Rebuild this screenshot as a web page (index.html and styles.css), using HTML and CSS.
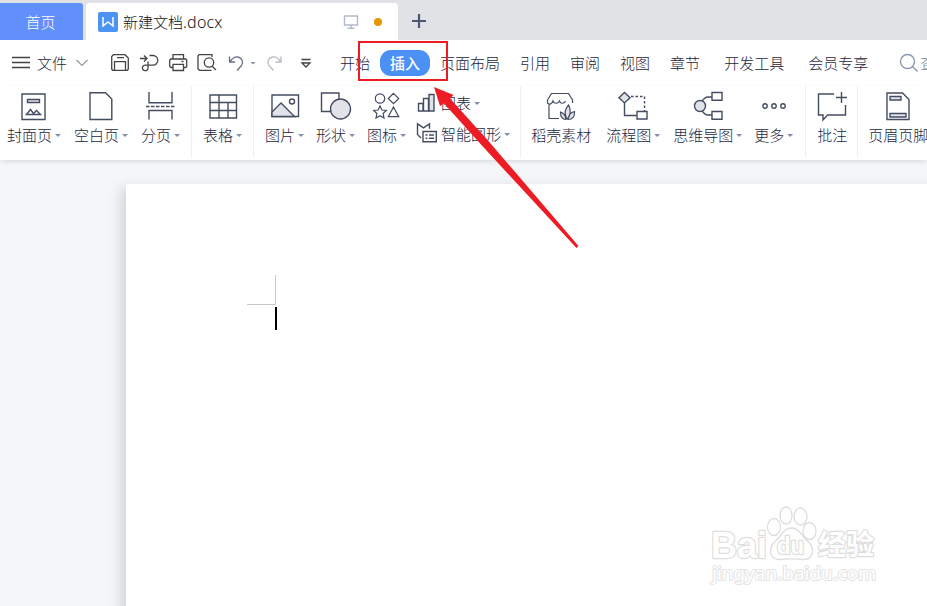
FILE: index.html
```html
<!DOCTYPE html>
<html lang="zh-CN">
<head>
    <meta charset="UTF-8">
    <meta name="viewport" content="width=device-width, initial-scale=1.0">
    <title>新建文档.docx</title>
    <link rel="stylesheet" href="styles.css">
</head>
<body>
    <div class="tabs">
        <div class="tab-home">首页</div>
        <div class="tab-doc">
            <svg class="doc-logo" width="20" height="20" viewBox="0 0 20 20"><path d="M5 5v9l5-4 5 4V5" fill="none" stroke="#fff" stroke-width="1.5"/></svg>
            <span class="doc-name">新建文档<span class="ext">.docx</span></span>
            <svg class="monitor" width="16" height="16" viewBox="0 0 16 16"><path d="M1.500 2h13v9h-13zM8 11v3.300M4.500 14.300h7"/></svg>
            <span class="dot"></span>
        </div>
        <svg class="plus" width="16" height="16" viewBox="0 0 16 16"><path d="M8 1v14M1 8h14"/></svg>
    </div>

    <div class="menu">
        <svg class="burger" width="20" height="20" viewBox="0 0 20 20"><path d="M1 4.500h18M1 9.500h18M1 14.500h18"/></svg>
        <span class="file">文件</span>
        <svg class="chevron" width="12" height="8" viewBox="0 0 12 8"><path d="M.5 1l5.500 5.500L11.500 1"/></svg>
        <span class="line"></span>
        <div class="quick">
            <svg width="20" height="20" viewBox="0 0 20 20"><path d="M3.500 1.700h11.500l3.300 3.300v11.300l-1 1H2.700l-1-1V3.500zM4.500 17V8.700h11V17M7 4.700h7"/></svg>
            <svg width="20" height="20" viewBox="0 0 20 20"><path d="M1 5.500h7M5 2.500l3 3-3 3M10.500 2.500h3.500a4.800 4.800 0 0 1 0 9.600H6.500a2.800 2.800 0 1 0 2.500 2.800V8.500"/></svg>
            <svg width="20" height="20" viewBox="0 0 20 20"><path d="M5 6V1.700h10.500V6M5 14.500H2.700L1.700 13V7l1-1h15l1 1v6.500l-1 1h-2.200M5 11.300h10.500v6.200H5zM13.500 8.500h2"/></svg>
            <svg width="20" height="20" viewBox="0 0 20 20"><path d="M14.500 17.300H2.500L1 15.800V3l1-1.300h13V4"/><circle cx="12" cy="9.500" r="4.700"/><path d="M15 13l4 4"/></svg>
            <svg class="undo" width="20" height="20" viewBox="0 0 20 20"><path d="M2.500 3.500v5.500h5.500M3 8.500C5.500 5 8 3.500 11 4c4 .7 5.800 5 3.500 8.500L10 17.500"/></svg>
            <i class="caret"></i>
            <svg class="redo" width="20" height="20" viewBox="0 0 20 20"><path d="M16 3.500v5.500h-5.500M15.500 8.500C13 5 10.500 3.500 7.500 4c-4 .7-5.800 5-3.500 8.500l4.500 5"/></svg>
            <svg class="more" width="12" height="20" viewBox="0 0 12 20"><path d="M1.500 6.500h9M2 10l4 4 4-4z"/></svg>
        </div>
        <span class="line"></span>
        <div class="menu-tabs">
            <span>开始</span>
            <span class="active">插入</span>
            <span>页面布局</span>
            <span>引用</span>
            <span>审阅</span>
            <span>视图</span>
            <span>章节</span>
            <span class="wide">开发工具</span>
            <span class="wide">会员专享</span>
        </div>
        <div class="search">
            <svg width="20" height="20" viewBox="0 0 20 20"><circle cx="8.500" cy="8.500" r="7"/><path d="M13.500 13.500l5 5"/></svg>
            <span>查</span>
        </div>
    </div>

    <div class="ribbon">
        <div class="group">
            <div class="tool">
                <svg viewBox="0 0 32 32"><path d="M4 4h23v25.500H4zM8.500 24.500l4-5 3 4 3-3 4 4z"/><path class="shade" d="M9.500 9.500h12v3h-12z"/></svg>
                <span>封面页<i class="caret"></i></span>
            </div>
            <div class="tool">
                <svg viewBox="0 0 32 32"><path d="M5 2.700h15.500l6.300 6.300v20.500H5z"/></svg>
                <span>空白页<i class="caret"></i></span>
            </div>
            <div class="tool">
                <svg viewBox="0 0 32 32"><path d="M4 2v10.700h23V2M4 29.500v-9h23v9"/><path d="M1 16.500h29" stroke-dasharray="3.500 1.500"/></svg>
                <span>分页<i class="caret"></i></span>
            </div>
        </div>
        <div class="group">
            <div class="tool">
                <svg viewBox="0 0 32 32"><path d="M3 5h26.500v23H3zM3 12.500h26.500M3 20.500h26.500M12 5v23M21 12.500v15.500"/></svg>
                <span>表格<i class="caret"></i></span>
            </div>
        </div>
        <div class="group insert">
            <div class="tool">
                <svg viewBox="0 0 32 32"><path d="M3 5h26.500v21.500H3z"/><path class="shade" d="M3 22l9-9 13.500 13.500H3z"/><circle cx="23" cy="11.500" r="2.500"/></svg>
                <span>图片<i class="caret"></i></span>
            </div>
            <div class="tool">
                <svg viewBox="0 0 32 32"><path d="M1.500 3H19v18.500H1.500z"/><circle class="shade" cx="20.500" cy="19" r="10"/></svg>
                <span>形状<i class="caret"></i></span>
            </div>
            <div class="tool">
                <svg class="thin" viewBox="0 0 32 32"><circle cx="9" cy="8.500" r="4.700"/><path d="M22.500 3.300l5.200 5.200-5.200 5.200-5.200-5.200zM9 16l1.900 4 4.400.5-3.200 3 .9 4.500-4-2.300-4 2.300.9-4.500-3.200-3 4.400-.5zM22.500 17l5.200 9.700H17.300z"/></svg>
                <span>图标<i class="caret"></i></span>
            </div>
            <div class="stack">
                <div class="row">
                    <svg viewBox="0 0 20 20"><path d="M1.500 10.500h4.500v7.500H1.500zM6.500 5.500h5v12.500h-5z"/><path class="shade" d="M12 1.500h5v16.500h-5z"/></svg>
                    <span>图表<i class="caret"></i></span>
                </div>
                <div class="row">
                    <svg viewBox="0 0 20 20"><path d="M4 14L.5 10.500V-.2l6 4 6-4v5"/><path d="M6 7.500h13.300v10.200H6zM8.500 11h2M12 11h5M8.500 14.200h2M12 14.200h5"/></svg>
                    <span>智能图形<i class="caret"></i></span>
                </div>
            </div>
        </div>
        <div class="group material">
            <div class="tool">
                <svg class="thin" viewBox="0 0 32 32"><path d="M4 14v14.500h10M2.500 10l4-6.500h17l4 6.500v3M2.500 10v3c2 2 4.500 1 5.500-2 1 3 5 3 6.500 0 1 3 4.500 3 6 0"/><path class="shade" d="M22.500 29c-4-5-2.500-10 1-14 2.500 4 2.500 10-1 14zM21 29.500c-4 0-5.500-3-5.500-7.500 3 1 5 4 5.500 7.500zM23 29.500c.5-5 2.500-7 6.500-8 .5 5-2 8-6.500 8z"/></svg>
                <span>稻壳素材</span>
            </div>
            <div class="tool flow">
                <svg viewBox="0 0 32 32"><path d="M7.500 13v12.500h12"/><path d="M14 6.500h13.500V21" stroke-dasharray="2.500 2"/><path class="shade" d="M7.500 2.500l5.500 5.200-5.500 5.200L2 7.700z"/><path d="M20 21.500h10v7.500H20z"/></svg>
                <span>流程图<i class="caret"></i></span>
            </div>
            <div class="tool">
                <svg viewBox="0 0 32 32"><path d="M20 7h-4c-4 0-5 3-7 6M20 25h-4c-4 0-5-3-7-6M20 2.500h10v7.800H20zM20 21.500h10v7.800H20z"/><circle class="shade" cx="8" cy="16" r="5.500"/></svg>
                <span>思维导图<i class="caret"></i></span>
            </div>
            <div class="tool">
                <svg viewBox="0 0 32 32"><circle cx="7" cy="16" r="2.200"/><circle cx="16" cy="16" r="2.200"/><circle cx="25" cy="16" r="2.200"/></svg>
                <span>更多<i class="caret"></i></span>
            </div>
        </div>
        <div class="group comment">
            <div class="tool">
                <svg viewBox="0 0 32 32"><path d="M18 4H2.500v21H7v5l4.500-5h18V15M25.500 2v11M20 7.500h11"/></svg>
                <span>批注</span>
            </div>
        </div>
        <div class="group last">
            <div class="tool">
                <svg viewBox="0 0 32 32"><path d="M5 3h15.500L27 9.500v20H5z"/><path class="shade" d="M8 6.500h11v3.500H8zM8 23.500h16v3.500H8z"/></svg>
                <span>页眉页脚</span>
            </div>
        </div>
    </div>

    <div class="workspace">
        <div class="paper">
            <div class="corner"></div>
            <div class="cursor"></div>
        </div>
    </div>

    <svg class="watermark" width="180" height="90" viewBox="0 0 180 90">
        <text class="brand" x="11" y="58" textLength="56" lengthAdjust="spacingAndGlyphs">Bai</text>
        <ellipse cx="74" cy="27" rx="6.500" ry="8.500"/>
        <ellipse cx="86" cy="15.500" rx="6" ry="8.500"/>
        <ellipse cx="100.500" cy="16.500" rx="6.500" ry="8.500"/>
        <ellipse cx="109.500" cy="31" rx="6.500" ry="8.500"/>
        <path d="M91.500 28c8 0 10 8 16 13 9 8 5 19-5 18.500-8-.8-14-.8-22 0-10 .5-14-10-5-18.500 6-5 8-13 16-13z"/>
        <text class="du" x="77" y="54" textLength="27" lengthAdjust="spacingAndGlyphs">du</text>
        <text class="exp" x="118" y="55" textLength="56" lengthAdjust="spacingAndGlyphs">经验</text>
        <text class="site" x="12" y="80" textLength="164" lengthAdjust="spacingAndGlyphs">jingyan.baidu.com</text>
    </svg>

    <div class="mark-box"></div>
    <svg class="mark-arrow" width="150" height="165" viewBox="0 0 150 165"><path d="M4 7L23.500 15l-3.300 3.800L58 60.500 148.500 166l-2 2L51 64.500 14 23.500 10 26z"/></svg>
</body>
</html>
```
FILE: styles.css
```css
* {
    box-sizing: border-box;
}
body {
    position: relative;
    width: 927px;
    height: 606px;
    margin: 0;
    overflow: hidden;
    display: flex;
    flex-direction: column;
    font-family: "Noto Sans CJK SC", sans-serif;
    font-size: 15px;
    font-weight: 300;
    line-height: 20px;
    color: #1c263c;
    background-color: #fff;
    white-space: nowrap;
}
svg {
    display: block;
    flex: none;
    fill: none;
    stroke: #434d61;
    stroke-width: 1.4;
}
.caret {
    display: inline-block;
    width: 6px;
    height: 3px;
    margin-left: 3px;
    vertical-align: 4px;
    background-color: #8290ab;
    clip-path: polygon(0 0, 100% 0, 50% 100%);
}

/* document tabs */
.tabs {
    flex: none;
    display: flex;
    height: 40px;
    padding-top: 3px;
    background-color: #e1e2e6;
}
.tab-home {
    width: 83px;
    padding: 9px 2px 0 0;
    text-align: center;
    color: #fff;
    background-color: #618ffc;
    border-radius: 0 3px 0 0;
}
.tab-doc {
    display: flex;
    align-items: center;
    width: 312px;
    margin-left: 3px;
    padding-left: 12px;
    background-color: #fff;
    border-radius: 4px 4px 0 0;
}
.doc-logo {
    background-color: #4b94f4;
    border-radius: 2px;
}
.doc-name {
    width: 225px;
    margin-left: 5px;
    color: #111;
}
.ext {
    font-family: "Noto Sans", sans-serif;
    font-size: 16px;
    letter-spacing: 0.2px;
}
.monitor {
    stroke: #b2b9cc;
    margin-left: -5px;
}
.dot {
    width: 8px;
    height: 8px;
    margin-left: 15px;
    border-radius: 50%;
    background-color: #e59700;
}
.plus {
    margin: 10px 0 0 13px;
    stroke: #4a5872;
    stroke-width: 2.2;
}

/* menu row */
.menu {
    flex: none;
    display: flex;
    align-items: center;
    height: 46px;
    padding-left: 11px;
}
.burger {
    stroke: #444;
}
.file {
    margin-left: 6px;
}
.chevron {
    margin-left: 9px;
    stroke: #999;
    stroke-width: 1.2;
}
.line {
    width: 1px;
    height: 30px;
    margin-left: 11px;
    background-color: #e0e1e4;
}
.quick {
    display: flex;
    align-items: center;
    gap: 9px;
    width: 212px;
    padding-left: 11px;
}
.quick svg {
    stroke: #444;
    stroke-width: 1.3;
}
.quick .undo {
    margin-left: 1px;
    stroke: #66718a;
}
.quick .caret {
    flex: none;
    margin-left: -6px;
}
.quick .redo {
    stroke: #b8bcc4;
}
.quick .more {
    margin-left: 6px;
}
.menu-tabs {
    display: flex;
    gap: 20px;
    margin-left: 18px;
}
.menu-tabs .wide {
    margin-left: 4px;
}
.menu-tabs .active {
    margin: -3px -10px;
    padding: 3px 10px;
    border-radius: 11px;
    color: #fff;
    font-weight: 500;
    background-color: #4b90f4;
}
.search {
    display: flex;
    margin-left: 31px;
    color: #75829a;
}
.search svg {
    stroke: #8c98ad;
}
.search span {
    margin-left: 1px;
}

/* ribbon */
.ribbon {
    position: relative;
    flex: none;
    display: flex;
    height: 74px;
    background-color: #fff;
    box-shadow: 0 2px 5px -1px rgba(0, 0, 0, 0.14);
}
.group {
    flex: none;
    display: flex;
    gap: 13px;
    height: 72px;
    padding: 4px 11px 0;
    border-right: 1px solid #eeeff1;
}
.group:first-child {
    padding-left: 7px;
}
.insert {
    gap: 12px;
    padding-right: 10px;
}
.material {
    gap: 12px;
    padding-left: 10px;
    padding-right: 12px;
}
.flow {
    margin: 0 1px 0 3px;
}
.comment {
    padding-left: 10px;
    padding-right: 9px;
}
.last {
    padding-left: 10px;
    border-right: 0;
}
.tool {
    display: flex;
    flex-direction: column;
    align-items: center;
}
.tool svg {
    width: 32px;
    height: 32px;
    margin-bottom: 3px;
}
.thin {
    stroke-width: 1.2;
}
svg .shade {
    fill: #e1e3e9;
}
.stack {
    display: flex;
    flex-direction: column;
    gap: 11px;
    padding-top: 3px;
    margin-left: -1px;
}
.row {
    display: flex;
    align-items: center;
    gap: 4px;
}
.row svg {
    width: 20px;
    height: 20px;
    overflow: visible;
}

/* page */
.workspace {
    flex: 1;
    padding: 24px 0 0 126px;
    background-color: #f5f6f8;
}
.paper {
    width: 900px;
    height: 600px;
    padding: 91px 0 0 121px;
    background-color: #fff;
    box-shadow: -5px 4px 12px rgba(0, 0, 0, 0.14);
}
.corner {
    width: 29px;
    height: 30px;
    border: solid #c8c8c8;
    border-width: 0 1px 1px 0;
}
.cursor {
    width: 2px;
    height: 23px;
    margin: 2px 0 0 28px;
    background-color: #000;
}

/* site watermark */
.watermark {
    position: absolute;
    left: 700px;
    top: 500px;
    fill: #fff;
    stroke: #dedede;
    stroke-width: 1.3;
}
.watermark text {
    paint-order: stroke;
    stroke-width: 2.4;
    stroke-linejoin: round;
    font-weight: bold;
    font-family: "Liberation Sans", "Noto Sans CJK SC", sans-serif;
}
.watermark .brand {
    font-size: 37px;
}
.watermark .du {
    font-size: 23px;
}
.watermark .exp {
    font-size: 28px;
}
.watermark .site {
    font-family: "Noto Sans", sans-serif;
    font-size: 18px;
    font-weight: normal;
    stroke: #e4e4e4;
    stroke-width: 2;
}

/* red callout */
.mark-box {
    position: absolute;
    left: 358px;
    top: 41px;
    width: 90px;
    height: 40px;
    border: 2px solid #ed1c24;
}
.mark-arrow {
    position: absolute;
    left: 430px;
    top: 80px;
    overflow: visible;
    fill: #ed1c24;
    stroke: none;
}
```
